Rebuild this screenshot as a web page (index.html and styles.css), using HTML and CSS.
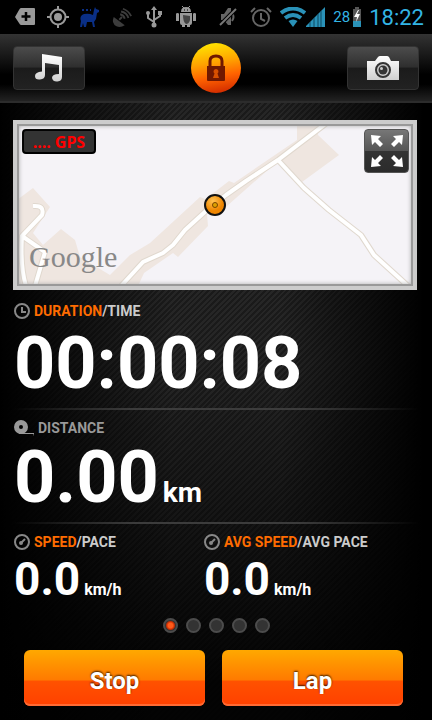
FILE: index.html
```
<!DOCTYPE html>
<html lang="en">
<head>
  <meta charset="UTF-8" />
  <meta name="viewport" content="width=device-width, initial-scale=1" />
  <title>Workout</title>
  <link rel="stylesheet" href="styles.css">
</head>
<body>
  <div class="status-bar">
    <div class="status-left">
      <svg width="22" height="20" viewBox="0 0 22 20"><path d="M7 1h13q1 0 1 1v15q0 1-1 1H7q-1 0-2-2L1 10l4-7q1-2 2-2z" fill="#999"/><path d="M12 5v9M7.500 9.500h9" stroke="#000" stroke-width="2.500"/></svg>
      <svg width="22" height="22" viewBox="0 0 22 22" fill="none" stroke="#999" stroke-width="2"><circle cx="11" cy="11" r="7.500"/><path d="M11 0v4M11 18v4M0 11h4M18 11h4"/><circle cx="11" cy="11" r="4" fill="#999" stroke="none"/></svg>
      <svg width="20" height="20" viewBox="0 0 20 20"><path d="M14 3l1-3 1 2 3 1v2l-2 1-1 6-2 3 1 5h-2l-1-5H7l-1 5H4l-1-4-1 4H0l1-6q-2-5 3-7 5-1 9 1z" fill="#0a2f86"/><path d="M2 3h2M6 3h2M10 3h1" stroke="#0a2f86" stroke-width="2"/></svg>
      <svg width="22" height="22" viewBox="0 0 24 24" fill="none" stroke="#3c3c3c" stroke-width="2"><path d="M3 12q-3 7 3 10 4 2 9-1z" fill="#3c3c3c" stroke="none"/><path d="M9 15l3-3M10 9q4 1 5 5M11 6q6 1 8 7M13 3q6 2 9 8"/></svg>
      <svg width="20" height="22" viewBox="-2 0 20 22" fill="none" stroke="#999" stroke-width="2"><path d="M8 3v16M2 8v4l6 4M14 7v3l-6 4"/><path d="M5 4l3-4 3 4z" fill="#999" stroke="none"/><circle cx="8" cy="19" r="2.500" fill="#999" stroke="none"/><circle cx="2" cy="7" r="2" fill="#999" stroke="none"/><path d="M12 5h4v4h-4z" fill="#999" stroke="none"/></svg>
      <svg width="22" height="24" viewBox="-1 0 22 24"><path d="M5 7q0-5 5-5t5 5zM4 8h12v10q0 2-2 2v2h-3v-2H9v2H6v-2q-2 0-2-2zM0 9q0-1 1.500-1T3 9v7H0zM17 9q0-1 1.500-1T20 9v7h-3z" fill="#999"/><path d="M6 1l2 2M14 1l-2 2" stroke="#999"/><path d="M7 10l7 1v4q-1 4-4 4-3-2-3-9z" fill="#444"/><path d="M8 5h1M11 5h1" stroke="#000"/></svg>
    </div>
    <div class="status-right">
      <svg width="18" height="20" viewBox="0 0 18 20"><path d="M2 7h3l4-6h3v17H9l-4-5H2z" fill="#666"/><path d="M13 6q3 4 0 8" fill="none" stroke="#666" stroke-width="2"/><path d="M1 18L17 2" stroke="#000" stroke-width="4"/><path d="M1 18L17 2" stroke="#777" stroke-width="2"/></svg>
      <svg class="alarm" width="22" height="22" viewBox="0 0 22 22" fill="none" stroke="#666" stroke-width="2"><circle cx="11" cy="12" r="8"/><path d="M11 7v6l4 2M1 6l4-4M21 6l-4-4"/></svg>
      <div class="signal">
        <svg width="26" height="20" viewBox="0 0 26 20" fill="none" stroke="#2a92b8" stroke-width="4"><path d="M1 6q12-9 24 0M5 11q8-6 16 0"/><path d="M8.500 14q4.500-3 9 0L13 20z" fill="#2a92b8" stroke="none"/></svg>
        <svg width="19" height="20" viewBox="0 0 19 20"><path d="M0 20v-1L19 0v20z" fill="#2a92b8"/><path d="M4 15v5M8 11v9M12 7v13M15 4v16" stroke="#0d4860"/></svg>
      </div>
      <span class="battery-level">28</span>
      <svg width="8" height="20" viewBox="0 0 8 20"><path d="M2 0h4v2h2v18H0V2h2z" fill="#555"/><path d="M0 14h8v6H0z" fill="#2a92b8"/><path d="M5 3L1 10h3l-1 5 4-8H4l2-4z" fill="#fff"/></svg>
      <span class="clock">18:22</span>
    </div>
  </div>

  <header class="top-bar">
    <button class="top-button" aria-label="Music">
      <svg width="28" height="28" viewBox="0 0 28 28"><defs><linearGradient id="silver" x1="0" y1="0" x2="0" y2="1"><stop offset="0" stop-color="#fff"/><stop offset="1" stop-color="#d0d0d0"/></linearGradient></defs><path d="M7 0l20 3v20q0 4-4.500 4.500T17 24q0-4 7-4v-9l-14-2v12q0 4-5 4.500T0 22q0-4 7-4.500z" fill="url(#silver)"/></svg>
    </button>
    <button class="lock-button" aria-label="Lock">
      <svg width="20" height="28" viewBox="0 0 20 28"><path d="M4 14V7q0-5 6-5t6 5v7" fill="none" stroke="#701800" stroke-width="3"/><path d="M1 12h18v14q0 1-1 1H2q-1 0-1-1z" fill="#701800"/><path d="M10 15a2.500 2.500 0 0 1 1.500 4.500l1.500 4.500H7l1.500-4.500A2.500 2.500 0 0 1 10 15z" fill="#d85000"/></svg>
    </button>
    <button class="top-button" aria-label="Camera">
      <svg width="32" height="24" viewBox="0 0 32 24"><path d="M0 5h8l3-4q1-1 2-1h7q1 0 2 1l2 4h8v19H0z" fill="url(#silver)"/><circle cx="16" cy="14" r="7" fill="#ccc" stroke="#333" stroke-width="2"/><circle cx="16" cy="14" r="4.500" fill="#333"/><circle cx="14.500" cy="12.500" r="1.500" fill="#ccc"/></svg>
    </button>
  </header>

  <main class="workout">
    <section class="map">
      <svg class="map-canvas" viewBox="0 0 396 162" preserveAspectRatio="xMidYMid slice">
        <g fill="#efe6e0">
          <path d="M0 76L16 64l17 19-17 26 10 12 18-16 14 11 5 17 30 18 20-20 20-12 50-46 5 2 11-8 13-10 5 2 63-43V0h22l-1 11 21 20-37 27-23-22-61 54-11 0 1 12-30 31-5-4-29 20-6 13H0z"/>
        </g>
        <g fill="none" stroke-linejoin="round">
          <g stroke="#e0d8ce" stroke-width="6">
            <path d="M104 162l22-24 20-9 10-8 12-15 22-20 19-15 20-14 32-21 50-38"/>
            <path d="M261 36l26 28 25 22 32 25 13 20 34 31"/>
            <path d="M16 82q12-1 9 9L5 112l23 16-10 34M5 112q-2 30 4 50"/>
          </g>
          <g stroke="#fff" stroke-width="4">
            <path d="M104 162l22-24 20-9 10-8 12-15 22-20 19-15 20-14 32-21 50-38"/>
            <path d="M261 36l26 28 25 22 32 25 13 20 34 31"/>
            <path d="M16 82q12-1 9 9L5 112l23 16-10 34M5 112q-2 30 4 50"/>
          </g>
        </g>
      </svg>
      <span class="gps"><span class="gps-bars">....</span>GPS</span>
      <span class="map-logo">Google</span>
      <svg class="position" width="24" height="24" viewBox="0 0 24 24"><defs><radialGradient id="pin" cx=".4" cy=".3"><stop offset="0" stop-color="#ffc252"/><stop offset="1" stop-color="#ee8500"/></radialGradient></defs><circle cx="12" cy="12" r="10" fill="url(#pin)" stroke="#111" stroke-width="2"/><circle cx="12" cy="12" r="2.500" fill="#dca000" stroke="#764500"/></svg>
      <button class="expand" aria-label="Full screen map">
        <svg width="34" height="34" viewBox="0 0 34 34" fill="#fff"><path d="M1 1l10 1-3 3 5 5-3 3-5-5-3 3z"/><path d="M33 1l-10 1 3 3-5 5 3 3 5-5 3 3z"/><path d="M1 33l1-10 3 3 5-5 3 3-5 5 3 3z"/><path d="M33 33l-1-10-3 3-5-5-3 3 5 5-3 3z"/></svg>
      </button>
    </section>

    <section class="metric metric-duration">
      <h2 class="label">
        <svg width="16" height="16" viewBox="0 0 16 16" fill="none" stroke="#888" stroke-width="2"><circle cx="8" cy="8" r="7"/><path d="M8 4v5h4"/></svg>
        <span><em>DURATION</em>/TIME</span>
      </h2>
      <p class="value">00:00:08</p>
    </section>

    <section class="metric">
      <h2 class="label label-muted">
        <svg width="20" height="16" viewBox="0 0 20 16"><circle cx="7" cy="7" r="4.500" fill="none" stroke="#999" stroke-width="5"/><path d="M5 13.500h15v2" fill="none" stroke="#999"/></svg>
        <span>DISTANCE</span>
      </h2>
      <p class="value">0.00<span class="unit">km</span></p>
    </section>

    <section class="metric metric-pair">
      <div>
        <h2 class="label">
          <svg width="16" height="16" viewBox="0 0 16 16" fill="none" stroke="#888" stroke-width="2"><circle cx="8" cy="8" r="7"/><path d="M11 5L7 9" /><circle cx="7" cy="9" r="1"/></svg>
          <span><em>SPEED</em>/PACE</span>
        </h2>
        <p class="value value-small">0.0<span class="unit">km/h</span></p>
      </div>
      <div>
        <h2 class="label">
          <svg width="16" height="16" viewBox="0 0 16 16" fill="none" stroke="#888" stroke-width="2"><circle cx="8" cy="8" r="7"/><path d="M11 5L7 9" /><circle cx="7" cy="9" r="1"/></svg>
          <span><em>AVG SPEED</em>/AVG PACE</span>
        </h2>
        <p class="value value-small">0.0<span class="unit">km/h</span></p>
      </div>
    </section>

    <div class="pages">
      <span class="dot active"></span>
      <span class="dot"></span>
      <span class="dot"></span>
      <span class="dot"></span>
      <span class="dot"></span>
    </div>
  </main>

  <footer class="actions">
    <button>Stop</button>
    <button>Lap</button>
  </footer>
</body>
</html>
```
FILE: styles.css
```
* {
  margin: 0;
  padding: 0;
  box-sizing: border-box;
}

body {
  font-family: Roboto, sans-serif;
  color: #fff;
  min-height: 100vh;
  background:
    linear-gradient(90deg, #000, transparent 40%, transparent 65%, #000 98%),
    linear-gradient(transparent 50%, rgba(0, 0, 0, 0.9) 95%),
    repeating-linear-gradient(135deg, #1a1a1a 0 2px, #262626 2px 4px);
}

svg {
  display: block;
  flex-shrink: 0;
}

button {
  border: none;
  font-family: inherit;
  color: #fff;
  cursor: pointer;
}

.status-bar {
  height: 34px;
  padding: 0 8px 0 14px;
  background: #000;
  display: flex;
  align-items: center;
  justify-content: space-between;
}

.status-left,
.status-right {
  display: flex;
  align-items: center;
}

.status-left {
  gap: 11px;
}

.status-right {
  gap: 8px;
  color: #33b5e5;
}

.alarm {
  margin-left: 5px;
}

.signal {
  display: flex;
}

.battery-level {
  font-size: 15px;
}

.battery-level + svg {
  margin-left: -5px;
}

.clock {
  font-size: 22px;
}

.top-bar {
  height: 69px;
  padding: 0 13px;
  display: flex;
  align-items: center;
  justify-content: space-between;
  background: linear-gradient(#333, #1a1a1a 30%, #000 60%, #000 75%, #222);
  border-bottom: 2px solid #2c2c2c;
}

.top-button {
  width: 72px;
  height: 44px;
  display: flex;
  align-items: center;
  justify-content: center;
  border: 1px solid #333;
  border-radius: 4px;
  background: linear-gradient(#4c4c4c, #2e2e2e 48%, #1b1b1b 50%, #222);
}

.lock-button {
  width: 50px;
  height: 50px;
  display: flex;
  align-items: center;
  justify-content: center;
  border-radius: 50%;
  background: linear-gradient(170deg, #ffe600 5%, #ffa200 40%, #ff6200 65%, #c82000);
}

.workout {
  padding: 17px 14px 0;
}

.map {
  position: relative;
  height: 170px;
  margin: 0 1px 3px -1px;
  border: 4px solid #ccc;
  background: #f5f3f7;
}

.map::after {
  content: "";
  position: absolute;
  inset: 0;
  border: 2px solid #999;
  box-shadow: inset 0 0 4px #aaa;
  pointer-events: none;
}

.map-canvas {
  width: 100%;
  height: 100%;
}

.gps {
  position: absolute;
  top: 5px;
  left: 5px;
  width: 74px;
  height: 25px;
  border: 2px solid #000;
  border-radius: 4px;
  background: #333;
  color: #f00;
  font: bold 16px/22px "Noto Sans", sans-serif;
  text-align: center;
}

.gps-bars {
  margin-right: 4px;
}

.map-logo {
  position: absolute;
  left: 12px;
  bottom: 11px;
  color: #888;
  font: 30px/36px "Liberation Serif", serif;
}

.position {
  position: absolute;
  top: 50%;
  left: 50%;
  transform: translate(-50%, -50%);
}

.expand {
  position: absolute;
  top: 5px;
  right: 4px;
  width: 45px;
  height: 44px;
  display: flex;
  align-items: center;
  justify-content: center;
  border: 1px solid #555;
  border-radius: 4px;
  background: linear-gradient(#777, #555 49%, #333 50%, #2b2b2b);
  z-index: 1;
}

.metric {
  padding: 9px 0 8px;
}

/* groove between two metrics */
.metric + .metric {
  border-top: 2px solid;
  border-image: linear-gradient(90deg, transparent, #3c3c3c 30%, #3c3c3c 70%, transparent) 1;
}

.label {
  display: flex;
  align-items: center;
  gap: 4px;
  margin-bottom: 5px;
  font-size: 14px;
  font-weight: 700;
  line-height: 18px;
  color: #ccc;
}

.label em {
  font-style: normal;
  color: #ff6c00;
}

.label-muted {
  color: #999;
}

.metric-duration .label {
  margin-bottom: 8px;
}

.value {
  font-size: 72px;
  font-weight: 700;
  line-height: 72px;
}

.unit {
  margin-left: 4px;
  font-size: 28px;
  line-height: 1;
}

.metric-pair {
  display: grid;
  grid-template-columns: 47% 53%;
  padding-bottom: 0;
}

.value-small {
  font-size: 46px;
  line-height: 46px;
}

.value-small .unit {
  font-size: 16px;
}

.pages {
  display: flex;
  justify-content: center;
  gap: 8px;
  margin-top: 16px;
}

.dot {
  width: 15px;
  height: 15px;
  border: 2px solid #4c4c4c;
  border-radius: 50%;
  background: #333;
}

.dot.active {
  background: radial-gradient(circle, #ff5a1a 30%, #cc2c00 50%, #333 65%);
}

.actions {
  display: flex;
  gap: 17px;
  padding: 17px 29px 14px 24px;
}

.actions button {
  flex: 1;
  height: 56px;
  padding-top: 5px;
  border-radius: 6px;
  box-shadow: inset 0 -2px #ff6a33;
  background: linear-gradient(#ffa800, #ff7a00 54%, #ff5200 55%, #ff4000);
  font-size: 24px;
  font-weight: 700;
  text-shadow: 0 -1px 2px rgba(0, 0, 0, 0.8);
}
```
